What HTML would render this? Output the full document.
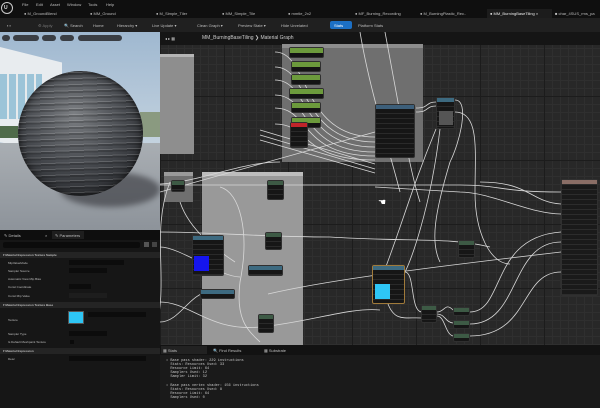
<!DOCTYPE html>
<html><head><meta charset="utf-8"><style>
*{margin:0;padding:0;box-sizing:border-box}
body{width:600px;height:408px;overflow:hidden;background:#151515;font-family:"Liberation Sans",sans-serif;font-size:4px;color:#bbb;position:relative}
.a{position:absolute}
.t{position:absolute;white-space:nowrap;font-size:4px;color:#bdbdbd}
.node{position:absolute;background:#161616 repeating-linear-gradient(#161616 0 3px,#2a2a2a 3px 4px,#161616 4px 5px);border:1px solid #303030;border-radius:2px}
.node .h{height:4px;background:#4a6b3a}
.gn{background:#141414}
.gn .h{background:#6c9a3c;height:5px}
</style></head><body>
<!-- top menu -->
<div class="a" style="left:0;top:0;width:600px;height:18px;background:#0f0f0f"></div>
<div class="a" style="left:1px;top:2px;width:12px;height:12px;border-radius:50%;border:1px solid #ccc;background:#111"></div>
<div class="t" style="left:4px;top:5px;color:#ddd;font-size:5px;font-weight:bold">U</div>
<div class="t" style="left:22px;top:2px">File</div><div class="t" style="left:36px;top:2px">Edit</div><div class="t" style="left:50px;top:2px">Asset</div><div class="t" style="left:67px;top:2px">Window</div><div class="t" style="left:88px;top:2px">Tools</div><div class="t" style="left:106px;top:2px">Help</div>
<div class="t" style="left:24px;top:11px">● M_GroundBlend</div>
<div class="t" style="left:90px;top:11px">● MM_Ground</div>
<div class="t" style="left:156px;top:11px">● M_Simple_Tiler</div>
<div class="t" style="left:222px;top:11px">● MM_Simple_Tile</div>
<div class="t" style="left:288px;top:11px">● mmtle_2x2</div>
<div class="t" style="left:355px;top:11px">● MF_Burning_Recording</div>
<div class="t" style="left:420px;top:11px">● M_BurningPlastic_Rec..</div>
<div class="a" style="left:487px;top:9px;width:65px;height:9px;background:#1c1c1c"></div>
<div class="t" style="left:490px;top:11px;color:#eee">● MM_BurningBaseTiling ×</div>
<div class="t" style="left:555px;top:11px">■ char_4SUS_rms_pa</div>
<!-- toolbar -->
<div class="a" style="left:0;top:18px;width:600px;height:14px;background:#202020"></div>
<div class="t" style="left:7px;top:23px">▪ ▪</div>
<div class="t" style="left:38px;top:23px;color:#777">⚙ Apply</div>
<div class="t" style="left:64px;top:23px">🔍 Search</div>
<div class="t" style="left:93px;top:23px">Home</div>
<div class="t" style="left:117px;top:23px">Hierarchy ▾</div>
<div class="t" style="left:152px;top:23px">Live Update ▾</div>
<div class="t" style="left:197px;top:23px">Clean Graph ▾</div>
<div class="t" style="left:238px;top:23px">Preview State ▾</div>
<div class="t" style="left:281px;top:23px">Hide Unrelated</div>
<div class="a" style="left:330px;top:21px;width:22px;height:8px;background:#1c6fc4;border-radius:2px"></div>
<div class="t" style="left:334px;top:23px;color:#fff">Stats</div>
<div class="t" style="left:358px;top:23px">Platform Stats</div>
<!-- viewport -->
<div class="a" style="left:0;top:32px;width:160px;height:198px;overflow:hidden;background:linear-gradient(#9fb8d0,#c6d4e0 60%,#dfe2e4)">
 <div class="a" style="left:0;top:15px;width:62px;height:95px;background:#e8ecef;transform:skewY(14deg);transform-origin:left top"></div>
 <div class="a" style="left:0;top:42px;width:42px;height:45px;background:repeating-linear-gradient(90deg,#9cc4d8 0 7px,#e6eaec 7px 9px)"></div>
 <div class="a" style="left:0;top:94px;width:18px;height:12px;background:#4f6b4a"></div>
 <div class="a" style="left:140px;top:80px;width:20px;height:25px;background:#8a9a80"></div>
 <div class="a" style="left:0;top:111px;width:160px;height:87px;background:linear-gradient(#a9aeb3,#8d939a)"></div>
 <div class="a" style="left:60px;top:140px;width:100px;height:35px;border-radius:50%;background:rgba(40,40,45,.55);filter:blur(3px)"></div>
 <div class="a" style="left:18px;top:39px;width:125px;height:125px;border-radius:50%;background:radial-gradient(circle at 45% 35%,#7c7f83,#4a4d52 45%,#2a2c30 80%,#1d1e20);box-shadow:inset 0 0 8px #111">
  <div class="a" style="left:0;top:0;width:125px;height:125px;border-radius:50%;background:repeating-linear-gradient(178deg,rgba(255,255,255,.0) 0 3px,rgba(230,230,230,.18) 3px 4px,rgba(0,0,0,.2) 4px 6px);"></div>
 </div>
 <div class="a" style="left:2px;top:3px;width:8px;height:6px;border-radius:3px;background:#3a3e44"></div>
 <div class="a" style="left:13px;top:3px;width:26px;height:6px;border-radius:3px;background:#3a3e44"></div>
 <div class="a" style="left:42px;top:3px;width:14px;height:6px;border-radius:3px;background:#3a3e44"></div>
 <div class="a" style="left:60px;top:3px;width:14px;height:6px;border-radius:3px;background:#3a3e44"></div>
 <div class="a" style="left:78px;top:3px;width:44px;height:6px;border-radius:3px;background:#3a3e44"></div>
</div>
<!-- details panel -->
<div class="a" style="left:0;top:230px;width:160px;height:178px;background:#161616"></div>
<div class="a" style="left:0;top:230px;width:160px;height:10px;background:#0e0e0e"></div>
<div class="t" style="left:4px;top:233px">✎ Details</div><div class="t" style="left:45px;top:233px">×</div>
<div class="a" style="left:52px;top:231px;width:32px;height:8px;background:#1e1e1e"></div>
<div class="t" style="left:55px;top:233px">✎ Parameters</div>
<div class="a" style="left:3px;top:242px;width:137px;height:6px;background:#0b0b0b;border-radius:2px"></div>
<div class="a" style="left:144px;top:242px;width:5px;height:5px;background:#555"></div><div class="a" style="left:152px;top:242px;width:5px;height:5px;background:#444"></div>
<div class="a" style="left:0;top:252px;width:160px;height:6px;background:#242424"></div>
<div class="t" style="left:3px;top:253px;font-size:3px;font-weight:bold">▾ Material Expression Texture Sample</div>
<div class="t" style="left:8px;top:261px;font-size:3px">MipValueMode</div><div class="a" style="left:69px;top:260px;width:55px;height:5px;background:#0c0c0c"></div>
<div class="t" style="left:8px;top:269px;font-size:3px">Sampler Source</div><div class="a" style="left:69px;top:268px;width:38px;height:5px;background:#0c0c0c"></div>
<div class="t" style="left:8px;top:277px;font-size:3px">Automatic View Mip Bias</div>
<div class="t" style="left:8px;top:285px;font-size:3px">Const Coordinate</div><div class="a" style="left:69px;top:284px;width:22px;height:5px;background:#0c0c0c"></div>
<div class="t" style="left:8px;top:294px;font-size:3px">Const Mip Value</div><div class="a" style="left:69px;top:293px;width:38px;height:5px;background:#1d1d1d"></div>
<div class="a" style="left:0;top:302px;width:160px;height:6px;background:#242424"></div>
<div class="t" style="left:3px;top:303px;font-size:3px;font-weight:bold">▾ Material Expression Texture Base</div>
<div class="a" style="left:68px;top:311px;width:16px;height:13px;background:#2ec6f5;border:1px solid #555"></div>
<div class="t" style="left:8px;top:318px;font-size:3px">Texture</div>
<div class="a" style="left:88px;top:312px;width:58px;height:5px;background:#0c0c0c"></div>
<div class="t" style="left:8px;top:332px;font-size:3px">Sampler Type</div><div class="a" style="left:69px;top:331px;width:38px;height:5px;background:#0c0c0c"></div>
<div class="t" style="left:8px;top:340px;font-size:3px">Is Default Meshpaint Texture</div><div class="a" style="left:70px;top:340px;width:4px;height:4px;background:#0a0a0a"></div>
<div class="a" style="left:0;top:348px;width:160px;height:6px;background:#242424"></div>
<div class="t" style="left:3px;top:349px;font-size:3px;font-weight:bold">▾ Material Expression</div>
<div class="t" style="left:8px;top:357px;font-size:3px">Desc</div><div class="a" style="left:69px;top:356px;width:77px;height:5px;background:#0c0c0c"></div>
<!-- graph -->
<div class="a" style="left:160px;top:32px;width:440px;height:313px;background-color:#282828;background-image:linear-gradient(90deg,#1c1c1c 1px,transparent 1px),linear-gradient(#1c1c1c 1px,transparent 1px),linear-gradient(90deg,#2f2f2f 1px,transparent 1px),linear-gradient(#2f2f2f 1px,transparent 1px);background-size:64px 64px,64px 64px,8px 8px,8px 8px;overflow:hidden">
 <div class="a" style="left:0;top:0;width:440px;height:13px;background:#151515"></div>
 <div class="t" style="left:5px;top:4px;color:#ccc">◂ ▸ ▦</div>
 <div class="t" style="left:42px;top:3px;font-size:5px;color:#ccc">MM_BurningBaseTiling ❯ Material Graph</div>
 <div class="a" style="left:0;top:22px;width:34px;height:100px;background:#8e8e8e"></div><div class="a" style="left:0;top:22px;width:34px;height:3px;background:#b5b5b5"></div>
 <div class="a" style="left:122px;top:12px;width:141px;height:118px;background:#6f6f6f"></div><div class="a" style="left:122px;top:12px;width:141px;height:4px;background:#8d8d8d"></div>
 <div class="a" style="left:4px;top:140px;width:29px;height:30px;background:#6f6f6f"></div><div class="a" style="left:4px;top:140px;width:29px;height:4px;background:#9a9a9a"></div>
 <div class="a" style="left:42px;top:140px;width:101px;height:173px;background:#999"></div><div class="a" style="left:42px;top:140px;width:101px;height:4px;background:#bdbdbd"></div>
 <svg class="a" style="left:0;top:0" width="440" height="313" fill="none" stroke="#d8d8d8" stroke-width="0.8">
  <path d="M115,20 C150,20 140,105 215,105"/><path d="M115,35 C150,35 140,110 215,110"/><path d="M115,48 C150,48 140,115 215,115"/><path d="M115,63 C150,63 140,120 215,120"/><path d="M115,76 C150,76 140,124 215,124"/><path d="M115,92 C150,92 140,128 215,128"/>
  <path d="M100,98 L215,132"/><path d="M100,103 L215,137"/><path d="M100,108 L215,141"/>
  <path d="M0,152 C40,150 80,130 120,130"/><path d="M0,160 L215,100"/>
  <path d="M256,76 C270,76 265,70 276,70"/><path d="M256,80 C270,80 265,74 276,74"/>
  <path d="M295,68 C310,68 300,110 290,130 C275,180 270,210 280,230"/>
  <path d="M295,80 C320,80 315,120 315,160 C315,200 330,232 350,232"/>
  <path d="M276,97 C250,160 240,200 220,250"/><path d="M280,97 C270,180 250,230 245,240"/>
  <path d="M0,153 L300,153 C340,153 340,160 401,160"/>
  <path d="M200,0 C210,60 230,120 240,160"/><path d="M225,0 C240,80 250,140 260,170"/>
  <path d="M215,155 L300,160 C330,160 370,182 401,182"/>
  <path d="M320,150 C370,150 370,170 401,172"/>
  <path d="M0,200 C50,200 100,205 170,205 C250,210 290,205 330,215"/>
  <path d="M108,262 C160,250 230,240 401,220"/>
  <path d="M0,215 C20,215 60,245 80,245"/>
  <path d="M0,270 C30,270 50,300 100,295 C150,290 190,275 220,278"/>
  <path d="M0,290 C20,290 30,260 50,260"/>
  <path d="M245,240 C255,240 250,280 262,280"/><path d="M228,272 C235,290 245,285 262,286"/>
  <path d="M277,280 C285,280 285,270 293,278"/><path d="M277,282 C285,282 285,290 293,291"/><path d="M277,284 C285,284 285,302 293,304"/>
  <path d="M310,280 C345,280 330,205 401,200"/><path d="M310,292 C360,292 350,210 401,210"/><path d="M310,304 C370,304 360,240 401,240"/>
  <path d="M60,155 C80,160 90,200 80,250 C75,290 90,300 100,310"/>
  <path d="M20,170 C30,200 60,220 75,230"/>
  <path d="M10,150 C-10,200 10,250 -5,300"/>
 </svg>
 <div class="node gn" style="left:129px;top:15px;width:35px;height:11px"><div class="h"></div></div>
 <div class="node gn" style="left:131px;top:29px;width:30px;height:11px"><div class="h"></div></div>
 <div class="node gn" style="left:131px;top:42px;width:30px;height:11px"><div class="h"></div></div>
 <div class="node gn" style="left:129px;top:56px;width:35px;height:11px"><div class="h"></div></div>
 <div class="node gn" style="left:131px;top:70px;width:30px;height:11px"><div class="h"></div></div>
 <div class="node gn" style="left:131px;top:85px;width:30px;height:11px"><div class="h"></div></div>
 <div class="node" style="left:130px;top:90px;width:18px;height:26px"><div class="h" style="background:#c0242a"></div></div>
 <div class="node" style="left:215px;top:72px;width:40px;height:54px"><div class="h" style="background:#3d5f7a"></div></div>
 <div class="node" style="left:276px;top:65px;width:19px;height:32px"><div class="h" style="background:#3d6a80"></div><div class="a" style="left:2px;top:13px;width:14px;height:14px;background:#555"></div></div>
 <div class="node" style="left:11px;top:148px;width:14px;height:12px"><div class="h" style="background:#3d5a45"></div></div>
 <div class="node" style="left:107px;top:148px;width:17px;height:20px"><div class="h" style="background:#3d5a45"></div></div>
 <div class="node" style="left:105px;top:200px;width:17px;height:18px"><div class="h" style="background:#3d5a45"></div></div>
 <div class="node" style="left:32px;top:203px;width:32px;height:41px"><div class="h" style="background:#3d6a80"></div><div class="a" style="left:1px;top:20px;width:15px;height:15px;background:#1515ee"></div></div>
 <div class="node" style="left:88px;top:233px;width:35px;height:11px"><div class="h" style="background:#3d6a80"></div></div>
 <div class="node" style="left:40px;top:257px;width:35px;height:10px"><div class="h" style="background:#3d6a80"></div></div>
 <div class="node" style="left:98px;top:282px;width:16px;height:19px"><div class="h" style="background:#3d5a45"></div></div>
 <div class="node" style="left:212px;top:233px;width:33px;height:39px;border-color:#a07a3a"><div class="h" style="background:#3d6a80"></div><div class="a" style="left:2px;top:18px;width:15px;height:15px;background:#2ec6f5"></div></div>
 <div class="node" style="left:420px;top:148px;width:18px;height:18px"><div class="h" style="background:#3d5a45"></div></div>
 <div class="node" style="left:298px;top:208px;width:17px;height:18px"><div class="h" style="background:#3d5a45"></div></div>
 <div class="node" style="left:261px;top:273px;width:16px;height:18px"><div class="h" style="background:#3d5a45"></div></div>
 <div class="node" style="left:293px;top:275px;width:17px;height:9px"><div class="h" style="background:#3d5a45"></div></div>
 <div class="node" style="left:293px;top:288px;width:17px;height:9px"><div class="h" style="background:#3d5a45"></div></div>
 <div class="node" style="left:293px;top:301px;width:17px;height:9px"><div class="h" style="background:#3d5a45"></div></div>
 <div class="node" style="left:401px;top:147px;width:37px;height:117px;background:#1a1a1a repeating-linear-gradient(#1a1a1a 0 4px,#2c2c2c 4px 5px)"><div class="h" style="background:#8a6e66"></div></div>
 <div class="t" style="left:218px;top:165px;font-size:9px;color:#fff">☚</div>
</div>
<!-- stats panel -->
<div class="a" style="left:160px;top:345px;width:440px;height:63px;background:#1a1a1a"></div>
<div class="a" style="left:160px;top:345px;width:440px;height:10px;background:#121212"></div>
<div class="a" style="left:161px;top:346px;width:46px;height:8px;background:#222"></div>
<div class="t" style="left:163px;top:348px">▦ Stats</div>
<div class="t" style="left:213px;top:348px">🔍 Find Results</div>
<div class="t" style="left:264px;top:348px">▦ Substrate</div>
<div class="a" style="left:166px;top:359px;font-family:'Liberation Mono',monospace;font-size:3.6px;line-height:4.1px;color:#c4c4c4;white-space:pre">• Base pass shader: 229 instructions
  Stats: Resources Used: 33
  Resource Limit: 64
  Samplers Used: 12
  Sampler Limit: 32

• Base pass vertex shader: 156 instructions
  Stats: Resources Used: 8
  Resource Limit: 64
  Samplers Used: 0</div>
</body></html>
